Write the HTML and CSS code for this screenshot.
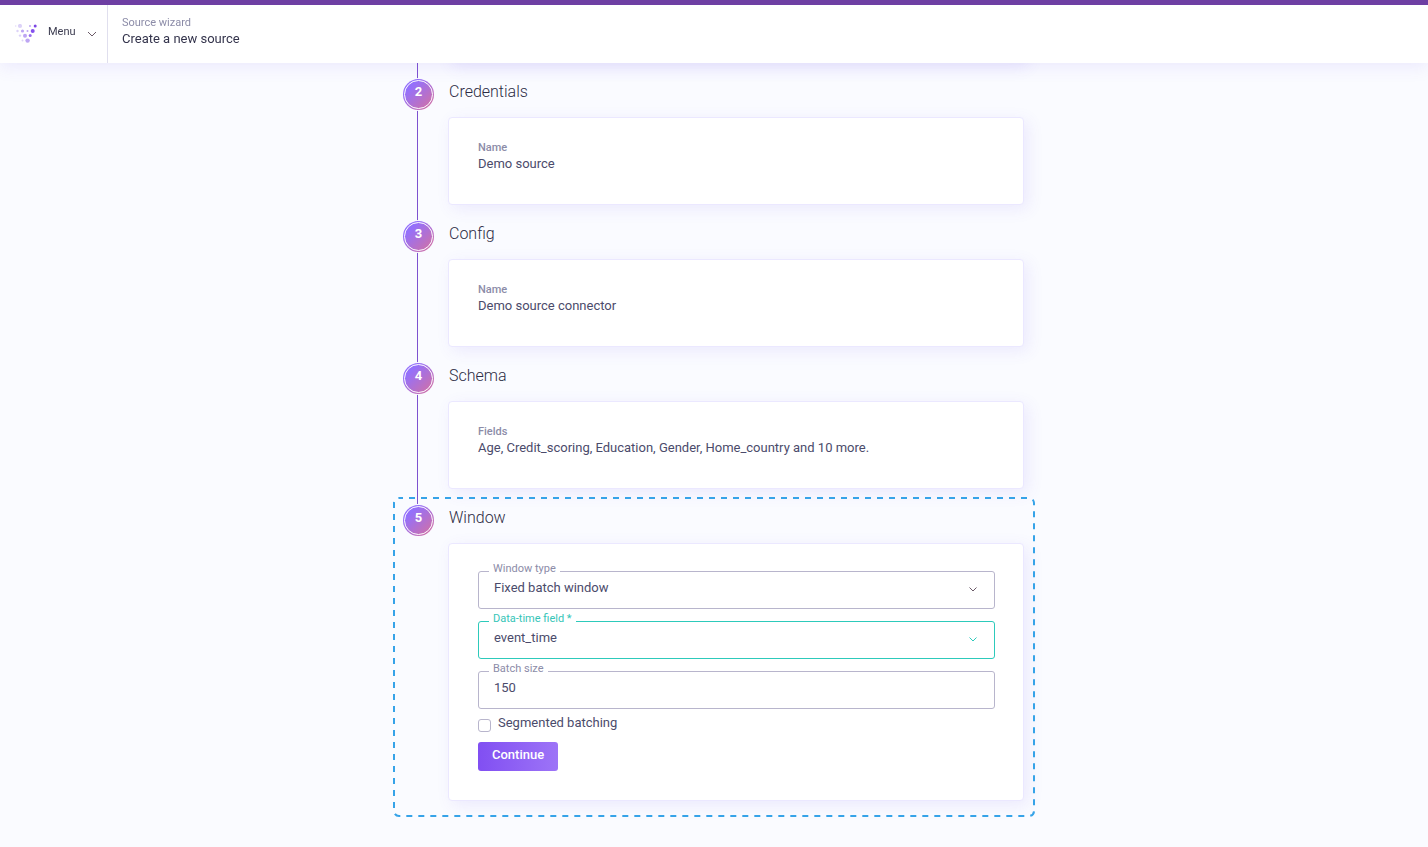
FILE: index.html
```html
<!DOCTYPE html>
<html lang="en">
<head>
  <meta charset="UTF-8">
  <meta name="viewport" content="width=device-width, initial-scale=1.0">
  <title>Create a new source</title>
  <link rel="stylesheet" href="styles.css">
</head>
<body>
  <header class="topbar">
    <button type="button" class="menu-btn">
      <svg class="logo" width="24" height="20" viewBox="0 0 24 20" aria-hidden="true">
        <g fill="#dcd2f8">
          <circle cx="0.5" cy="2" r="1" opacity="0.5"/>
          <circle cx="5" cy="2" r="2.1"/>
          <circle cx="2.5" cy="7" r="1.2"/>
          <circle cx="5" cy="11.6" r="1.2"/>
          <circle cx="7.5" cy="16.6" r="1"/>
        </g>
        <g fill="#bda5f3">
          <circle cx="7.5" cy="7" r="1.6"/>
          <circle cx="15" cy="2" r="1"/>
          <circle cx="12.5" cy="7" r="1"/>
          <circle cx="10" cy="11.7" r="2"/>
          <circle cx="12.6" cy="16.6" r="2.2"/>
        </g>
        <circle cx="15.2" cy="11.6" r="1.5" fill="#9a70ee"/>
        <circle cx="20.2" cy="2" r="1.5" fill="#7c46e4"/>
        <circle cx="17.7" cy="7" r="2" fill="#8450ee"/>
      </svg>
      <span class="menu-text">Menu</span>
      <svg class="chevron" width="10" height="6" viewBox="0 0 10 6" aria-hidden="true"><path d="M1 1l4 4 4-4"/></svg>
    </button>
    <div class="page-title">
      <span class="label">Source wizard</span>
      <h1>Create a new source</h1>
    </div>
  </header>

  <main class="wizard">
    <section class="step">
      <div class="card previous"></div>
    </section>

    <section class="step">
      <span class="number">2</span>
      <h2>Credentials</h2>
      <div class="card">
        <span class="label strong">Name</span>
        <p>Demo source</p>
      </div>
    </section>

    <section class="step">
      <span class="number">3</span>
      <h2>Config</h2>
      <div class="card">
        <span class="label strong">Name</span>
        <p>Demo source connector</p>
      </div>
    </section>

    <section class="step">
      <span class="number">4</span>
      <h2>Schema</h2>
      <div class="card">
        <span class="label strong">Fields</span>
        <p>Age, Credit_scoring, Education, Gender, Home_country and 10 more.</p>
      </div>
    </section>

    <section class="step current">
      <svg class="highlight" aria-hidden="true"><rect/></svg>
      <span class="number">5</span>
      <h2>Window</h2>
      <form class="card window-form">
        <div class="field">
          <label for="window-type">Window type</label>
          <select id="window-type">
            <option>Fixed batch window</option>
          </select>
          <svg class="chevron" width="8" height="5" viewBox="0 0 8 5" aria-hidden="true"><path d="M.5.5L4 4 7.5.5"/></svg>
        </div>
        <div class="field active">
          <label for="time-field">Data-time field *</label>
          <select id="time-field">
            <option>event_time</option>
          </select>
          <svg class="chevron" width="8" height="5" viewBox="0 0 8 5" aria-hidden="true"><path d="M.5.5L4 4 7.5.5"/></svg>
        </div>
        <div class="field">
          <label for="batch-size">Batch size</label>
          <input type="text" id="batch-size" value="150">
        </div>
        <div class="check">
          <input type="checkbox" id="segmented">
          <label for="segmented">Segmented batching</label>
        </div>
        <button type="button" class="continue-btn">Continue</button>
      </form>
    </section>
  </main>
</body>
</html>
```

FILE: styles.css
```css
* {
  box-sizing: border-box;
}
body {
  margin: 0;
  background-color: #fafbff;
  color: #4b4b6b;
  font-family: Roboto, "Liberation Sans", sans-serif;
  font-size: 13px;
  line-height: 16px;
}
h1, h2, p {
  margin: 0;
  font-weight: normal;
}
.label {
  display: block;
  color: #8c8ca8;
  font-size: 11px;
}
.strong {
  font-weight: 500;
}
.chevron {
  fill: none;
  stroke: #6b5a68;
  stroke-width: 1;
}

/* top bar */
.topbar {
  position: fixed;
  top: 0;
  left: 0;
  right: 0;
  z-index: 10;
  display: flex;
  height: 63px;
  border-top: 5px solid #6e3fa3;
  background: white;
  box-shadow: 0 4px 16px rgba(110, 80, 240, 0.1);
}
.menu-btn {
  display: flex;
  align-items: center;
  width: 108px;
  padding: 0 10px 5px 15px;
  border: 0;
  border-right: 1px solid #e0dfee;
  background: transparent;
  color: #3c3c50;
  font-family: inherit;
  font-size: 11px;
  cursor: pointer;
}
.logo {
  margin-top: 4px;
}
.menu-text {
  margin-left: 9px;
  margin-right: auto;
}
.menu-btn .chevron {
  margin-top: 4px;
}
.page-title {
  padding: 10px 14px;
}
.page-title h1 {
  color: #34344c;
  font-size: 13px;
}

/* steps */
.wizard {
  max-width: 642px;
  margin: 0 auto;
  padding: 0 11px 30px 10px;
}
.step {
  position: relative;
  padding-left: 45px;
  padding-bottom: 15px;
}
.step::before {
  content: "";
  position: absolute;
  top: 0;
  bottom: 0;
  left: 14px;
  width: 1px;
  background: #7d52d0;
}
.current::before {
  display: none;
}
.number {
  position: absolute;
  top: 1px;
  left: 0;
  width: 31px;
  height: 31px;
  border-radius: 50%;
  background: linear-gradient(135deg, #9470fb 25%, #cf70a8 90%);
  box-shadow: 0 0 0 1px #fafbff;
  color: white;
  font-weight: bold;
  line-height: 26px;
  text-align: center;
}
.number::after {
  content: "";
  position: absolute;
  inset: 1px;
  border: 1px solid white;
  border-radius: 50%;
}
.step h2 {
  height: 39px;
  padding-left: 1px;
  color: #2c2c44;
  font-size: 16px;
  font-weight: 300;
  line-height: 28px;
}
.card {
  min-height: 88px;
  padding: 22px 28px 29px 29px;
  border: 1px solid #ebe8ff;
  border-radius: 4px;
  background: white;
  box-shadow: 4px 4px 16px rgba(110, 80, 240, 0.1);
}
.previous {
  min-height: 63px;
}
.highlight {
  position: absolute;
  top: -7px;
  left: -10px;
  width: calc(100% + 21px);
  height: calc(100% + 8px);
  pointer-events: none;
}
.highlight rect {
  x: 1px;
  y: 1px;
  width: calc(100% - 2px);
  height: calc(100% - 2px);
  rx: 5px;
  fill: none;
  stroke: #36a3e8;
  stroke-width: 2px;
  stroke-dasharray: 6 6;
  stroke-dashoffset: 2px;
}

/* form */
.window-form {
  display: flex;
  flex-direction: column;
  padding-top: 27px;
}
.field {
  position: relative;
  margin-bottom: 12px;
}
.field label {
  position: absolute;
  top: -10px;
  left: 11px;
  padding: 0 4px;
  background: white;
  color: #8c8ca8;
  font-size: 11px;
}
.field select,
.field input {
  display: block;
  width: 100%;
  height: 38px;
  padding: 0 15px 5px;
  border: 1px solid #b8b5cc;
  border-radius: 3px;
  background: white;
  color: #4b4b6b;
  font-family: inherit;
  font-size: 13px;
  appearance: none;
}
.field .chevron {
  position: absolute;
  top: 16px;
  right: 18px;
}
.active select {
  border-color: #2dcabb;
}
.active label {
  color: #35c5b8;
}
.active .chevron {
  stroke: #2dcabb;
}
.check {
  display: flex;
  align-items: flex-start;
  height: 27px;
  margin-top: -6px;
}
.check input {
  width: 13px;
  height: 13px;
  margin: 4px 7px 0 0;
  border: 1px solid #b8b5cc;
  border-radius: 3px;
  background: white;
  appearance: none;
}
.continue-btn {
  align-self: flex-start;
  height: 29px;
  padding: 0 14px 4px;
  border: 0;
  border-radius: 3px;
  background: linear-gradient(90deg, #814ff2, #9d74f7);
  color: white;
  font-family: inherit;
  font-size: 13px;
  font-weight: 500;
  cursor: pointer;
}
```
